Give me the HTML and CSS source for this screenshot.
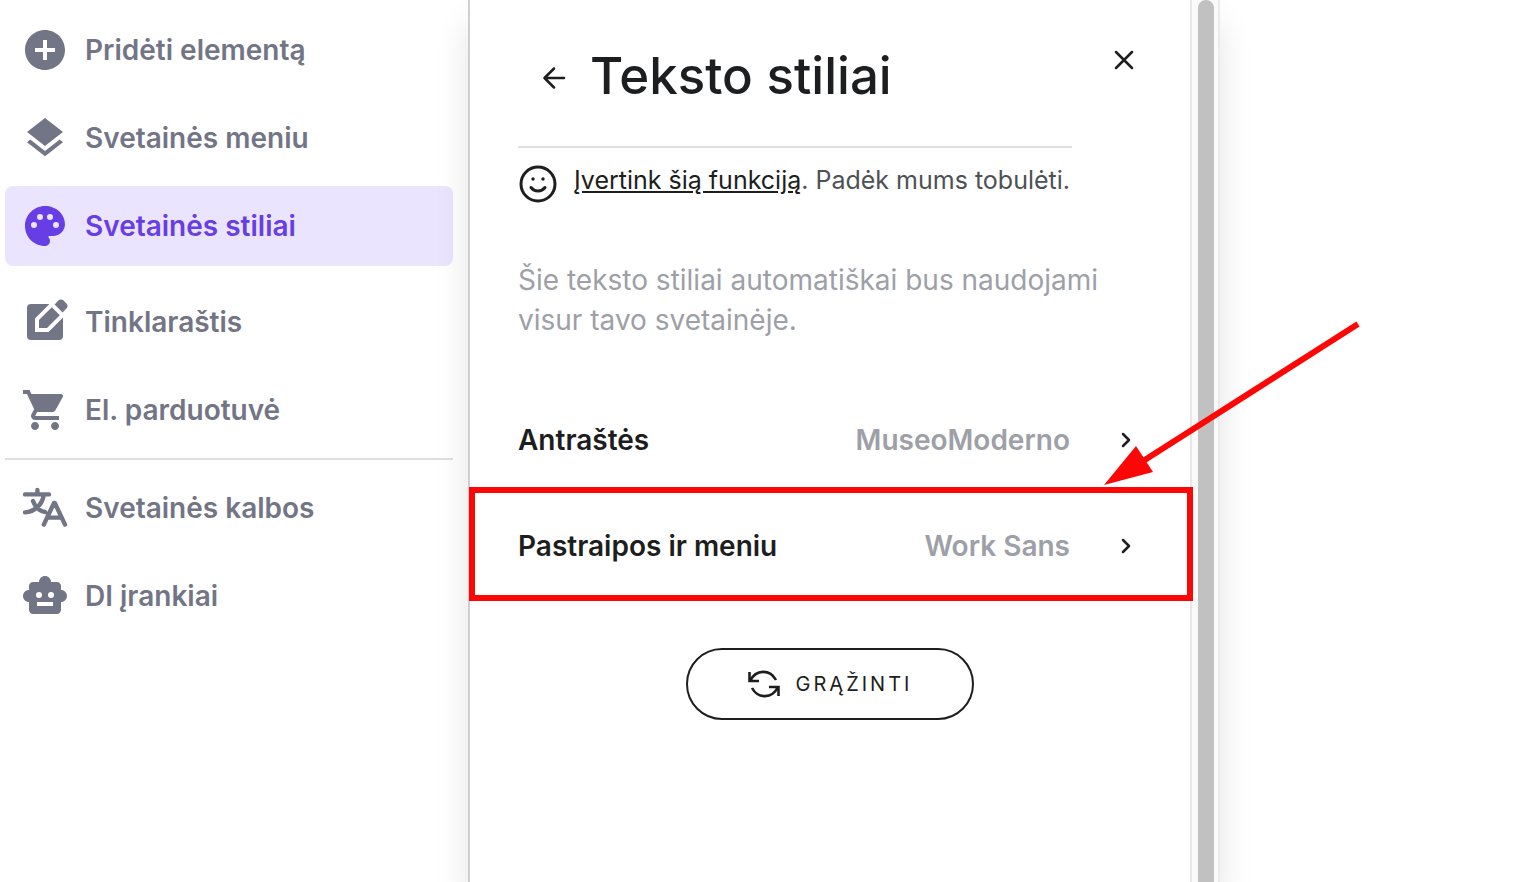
FILE: index.html
```html
<!DOCTYPE html>
<html lang="lt">
<head>
    <meta charset="UTF-8">
    <meta name="viewport" content="width=device-width, initial-scale=1.0">
    <title>Teksto stiliai</title>
    <link rel="stylesheet" href="styles.css">
</head>
<body>
    <div class="editor">
        <nav class="sidebar">
            <a class="nav-item" href="#">
                <svg class="nav-icon" viewBox="0 0 24 24"><path d="M12 2C6.480 2 2 6.480 2 12s4.480 10 10 10 10-4.480 10-10S17.520 2 12 2zm5 11h-4v4h-2v-4H7v-2h4V7h2v4h4v2z"/></svg>
                <span>Pridėti elementą</span>
            </a>
            <a class="nav-item" href="#">
                <svg class="nav-icon" viewBox="0 0 24 24"><path d="M11.990 18.540l-7.370-5.730L3 14.070l9 7 9-7-1.630-1.270-7.380 5.740zM12 16l7.360-5.730L21 9l-9-7-9 7 1.630 1.270L12 16z"/></svg>
                <span>Svetainės meniu</span>
            </a>
            <a class="nav-item active" href="#">
                <svg class="nav-icon" viewBox="0 0 24 24"><path d="M12 2C6.500 2 2 6.500 2 12s4.500 10 10 10c1.400 0 2.500-1.100 2.500-2.500 0-.600-.200-1.200-.640-1.670-.080-.100-.130-.210-.130-.330 0-.280.220-.500.500-.500H16c3.310 0 6-2.690 6-6C22 6.040 17.510 2 12 2zM6.500 13a1.500 1.500 0 1 1 0-3 1.500 1.500 0 0 1 0 3zm3-4a1.500 1.500 0 1 1 0-3 1.500 1.500 0 0 1 0 3zm5 0a1.500 1.500 0 1 1 0-3 1.500 1.500 0 0 1 0 3zm3 4a1.500 1.500 0 1 1 0-3 1.500 1.500 0 0 1 0 3z"/></svg>
                <span>Svetainės stiliai</span>
            </a>
            <a class="nav-item spaced" href="#">
                <svg class="nav-icon" viewBox="0 0 24 24"><path d="M14.200 3H5a2 2 0 0 0-2 2v14a2 2 0 0 0 2 2h14a2 2 0 0 0 2-2V9.800L13.800 17H7v-6.800z"/><path d="M9 11v4h4l6.400-6.400-4-4z"/><path d="M16.800 3.200l4 4 1.900-1.900c.8-.8.8-1.800 0-2.600l-1.400-1.400c-.8-.8-1.800-.8-2.600 0z"/></svg>
                <span>Tinklaraštis</span>
            </a>
            <a class="nav-item" href="#">
                <svg class="nav-icon" viewBox="0 0 24 24"><path d="M7 18c-1.100 0-1.990.9-1.990 2S5.900 22 7 22s2-.9 2-2-.9-2-2-2zM1 2v2h2l3.600 7.590-1.350 2.450c-.16.280-.25.610-.25.960 0 1.100.9 2 2 2h12v-2H7.420c-.14 0-.25-.11-.25-.25l.03-.12.9-1.630h7.450c.75 0 1.410-.41 1.750-1.030l3.580-6.490A1 1 0 0 0 20 4H5.210l-.94-2H1zm16 16c-1.100 0-1.990.9-1.990 2s.89 2 1.990 2 2-.9 2-2-.9-2-2-2z"/></svg>
                <span>El. parduotuvė</span>
            </a>
            <hr class="nav-divider">
            <a class="nav-item" href="#">
                <svg class="nav-icon lines" viewBox="0 0 24 24"><path d="M2 5.200h12M8.200 3V5M11.400 5.400C10.700 10 7 14 2 14.200M6 8.500c1 2.800 3.200 5 6 5.500M11.400 20.300L16.500 9.500h.4L22 20.300M13 16.800h7.300"/></svg>
                <span>Svetainės kalbos</span>
            </a>
            <a class="nav-item" href="#">
                <svg class="nav-icon" viewBox="0 0 24 24"><path fill-rule="evenodd" d="M22.990 11.990c0-1.650-1.340-2.990-2.990-2.990V7c0-1.100-.9-2-2-2h-3c0-1.660-1.340-3-3-3S9 3.340 9 5H6c-1.100 0-2 .9-2 2v2c-1.660 0-3 1.340-3 3s1.340 3 3 3v4c0 1.100.9 2 2 2h12c1.100 0 2-.9 2-2v-4c1.650 0 2.990-1.350 2.990-3.010zM7.500 11.500a1.500 1.500 0 1 1 3 0 1.500 1.500 0 0 1-3 0zM16 17H8v-2h8v2zm-1-4a1.500 1.500 0 1 1 0-3 1.500 1.500 0 0 1 0 3z"/></svg>
                <span>DI įrankiai</span>
            </a>
        </nav>

        <section class="panel">
            <div class="panel-body">
                <header class="panel-header">
                    <button class="icon-btn back" type="button" aria-label="Atgal">
                        <svg viewBox="0 0 24 24"><path d="M22 14H3M12 4.500L2.500 14l9.500 9.500"/></svg>
                    </button>
                    <h1>Teksto stiliai</h1>
                    <button class="icon-btn close" type="button" aria-label="Uždaryti">
                        <svg viewBox="0 0 24 24"><path d="M4 4l16 16M20 4L4 20"/></svg>
                    </button>
                </header>

                <div class="feedback">
                    <svg class="smiley" viewBox="0 0 40 40">
                        <circle cx="20" cy="20" r="17"/>
                        <path d="M13 23.500c3.500 4.700 10.500 4.700 14 0"/>
                        <circle class="eye" cx="15" cy="15" r="1.700"/>
                        <circle class="eye" cx="25" cy="15" r="1.700"/>
                    </svg>
                    <p><a href="#">Įvertink šią funkciją</a>. Padėk mums tobulėti.</p>
                </div>

                <p class="description">Šie teksto stiliai automatiškai bus naudojami visur tavo svetainėje.</p>

                <div class="font-list">
                    <button class="font-row" type="button">
                        <span class="font-label">Antraštės</span>
                        <span class="font-value">MuseoModerno</span>
                        <svg class="chevron" viewBox="0 0 32 32"><path d="M13 10l6 6-6 6"/></svg>
                    </button>
                    <div class="marked">
                        <button class="font-row" type="button">
                            <span class="font-label">Pastraipos ir meniu</span>
                            <span class="font-value">Work Sans</span>
                            <svg class="chevron" viewBox="0 0 32 32"><path d="M13 10l6 6-6 6"/></svg>
                        </button>
                        <div class="marker"></div>
                        <svg class="arrow" viewBox="0 0 260 168">
                            <path class="shaft" d="M256 5L38 144"/>
                            <path d="M2 166l32-39 17 26z"/>
                        </svg>
                    </div>
                </div>

                <button class="reset" type="button">
                    <svg viewBox="0 0 32 28"><path d="M1.500 2v9H11M2 11C8-1 22-1 28 10M30.500 26v-9H21M30 17C24 29 10 29 4 18"/></svg>
                    <span>GRĄŽINTI</span>
                </button>
            </div>
            <div class="scrollbar"><div class="thumb"></div></div>
        </section>
    </div>
</body>
</html>
```
FILE: styles.css
```css
* {
    box-sizing: border-box;
}
body {
    margin: 0;
    background: #fff;
    color: #1d1e20;
    font-family: Inter, "Liberation Sans", sans-serif;
    overflow-x: hidden;
}
h1, p {
    margin: 0;
}
button {
    font: inherit;
    color: inherit;
    background: none;
    border: 0;
    padding: 0;
    cursor: pointer;
}
.editor {
    display: flex;
    min-height: 100vh;
    overflow: hidden;
}

/* sidebar */
.sidebar {
    flex: 0 1 468px;
    display: flex;
    flex-direction: column;
    gap: 8px;
    padding: 10px 15px 10px 5px;
}
.nav-item {
    display: flex;
    align-items: center;
    gap: 16px;
    height: 80px;
    padding: 0 16px;
    border-radius: 8px;
    color: #727586;
    font-size: 28px;
    font-weight: 600;
    line-height: 32px;
    text-decoration: none;
}
.nav-item.active {
    background: #ebe4ff;
    color: #673de6;
}
.nav-item.spaced {
    margin-top: 8px;
}
.nav-icon {
    width: 48px;
    height: 48px;
    fill: currentColor;
}
.nav-icon.lines {
    fill: none;
    stroke: currentColor;
    stroke-width: 2.2;
    stroke-linecap: round;
    stroke-linejoin: round;
}
.nav-divider {
    width: 100%;
    margin: 0;
    border: 0;
    border-top: 2px solid #dfdfe1;
}

/* panel */
.panel {
    flex: 0 1 752px;
    display: flex;
    border-left: 2px solid #cfcfcf;
    border-right: 2px solid #ebebeb;
    background: #fff;
    box-shadow: 0 24px 32px rgba(0, 0, 0, 0.11);
}
.panel-body {
    flex: 1;
    display: flex;
    flex-direction: column;
    padding: 40px 48px;
}
.scrollbar {
    flex: 0 0 28px;
    padding: 0 4px 0 6px;
    border-left: 2px solid #e8e8e8;
    background: #fafafa;
}
.thumb {
    height: 100%;
    border-radius: 8px 8px 0 0;
    background: #c1c1c1;
}
.panel-header {
    display: flex;
    align-items: center;
    height: 72px;
}
.panel-header h1 {
    flex: 1;
    margin-left: 24px;
    font-size: 51px;
    font-weight: 500;
    line-height: 72px;
}
.icon-btn {
    display: flex;
    align-items: center;
    justify-content: center;
}
.icon-btn svg {
    overflow: visible;
    fill: none;
    stroke: #1d1e20;
    stroke-width: 2.5;
    stroke-linecap: round;
    stroke-linejoin: round;
}
.back {
    width: 24px;
    height: 40px;
    margin-left: 24px;
}
.back svg {
    width: 24px;
    height: 24px;
}
.close {
    align-self: flex-start;
    width: 36px;
    height: 40px;
}
.close svg {
    width: 24px;
    height: 24px;
}
.feedback {
    display: flex;
    gap: 16px;
    margin: 34px 70px 0 0;
    padding-top: 16px;
    border-top: 2px solid #dfdfe1;
    color: #4d5156;
    font-size: 25px;
    line-height: 32px;
    white-space: nowrap;
}
.feedback a {
    color: #1d1e20;
}
.smiley {
    flex: none;
    width: 40px;
    height: 40px;
    fill: none;
    stroke: #1d1e20;
    stroke-width: 3;
    stroke-linecap: round;
}
.smiley .eye {
    fill: #1d1e20;
    stroke: none;
}
.description {
    margin-top: 56px;
    color: #9da0a7;
    font-size: 28px;
    line-height: 40px;
}
.font-list {
    margin: 47px -48px 0;
}
.font-row {
    display: flex;
    align-items: center;
    width: 100%;
    height: 106px;
    padding: 0 48px;
    font-size: 28px;
    font-weight: 600;
    line-height: 32px;
    text-align: left;
}
.font-label {
    flex: 1;
}
.font-value {
    margin-right: 40px;
    color: #9da0a7;
}
.chevron {
    width: 32px;
    height: 32px;
    fill: none;
    stroke: #1d1e20;
    stroke-width: 2.5;
    stroke-linecap: round;
    stroke-linejoin: round;
}

/* red marker around the row and the arrow that points at it */
.marked {
    position: relative;
}
.marker {
    position: absolute;
    inset: -6px -3px -2px -1px;
    border: 6px solid #fd0606;
    pointer-events: none;
}
.arrow {
    position: absolute;
    right: -172px;
    bottom: 112px;
    width: 260px;
    height: 168px;
    fill: #fd0606;
    pointer-events: none;
}
.arrow .shaft {
    stroke: #fd0606;
    stroke-width: 6;
}

.reset {
    display: flex;
    align-items: center;
    justify-content: center;
    align-self: center;
    gap: 16px;
    width: 288px;
    height: 72px;
    margin-top: 49px;
    border: 2px solid #1d1e20;
    border-radius: 36px;
    font-size: 20px;
    letter-spacing: 3px;
}
.reset svg {
    width: 32px;
    height: 28px;
    fill: none;
    stroke: #1d1e20;
    stroke-width: 2.6;
}
```
